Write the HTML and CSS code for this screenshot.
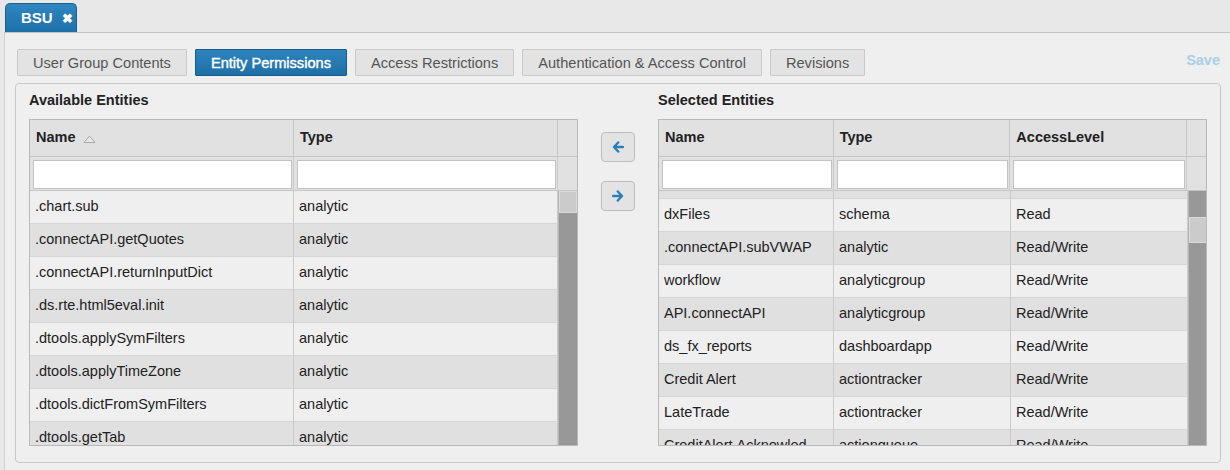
FILE: index.html
```html
<!DOCTYPE html>
<html lang="en">
<head>
    <meta charset="UTF-8">
    <title>BSU - Entity Permissions</title>
    <link rel="stylesheet" href="styles.css">
</head>
<body>
    <div class="tabbar">
        <div class="tab">BSU <span class="tab-close">&#10006;</span></div>
    </div>
    <div class="main">
        <div class="toolbar">
            <button class="seg">User Group Contents</button>
            <button class="seg active">Entity Permissions</button>
            <button class="seg">Access Restrictions</button>
            <button class="seg">Authentication &amp; Access Control</button>
            <button class="seg">Revisions</button>
            <span class="save">Save</span>
        </div>

        <div class="panel">
            <div class="side">
                <div class="side-title">Available Entities</div>
                <div class="grid">
                    <div class="grid-row head">
                        <div class="cell c-left">Name <svg class="sort" width="13" height="8" viewBox="0 0 13 8"><path d="M1 7.5 L6.5 1 L12 7.5 Z" fill="#e8e8e8" stroke="#aaa" stroke-width="1"/></svg></div>
                        <div class="cell c-left">Type</div>
                        <div class="cell c-scroll"></div>
                    </div>
                    <div class="grid-row filter">
                        <div class="cell c-left"><input type="text"></div>
                        <div class="cell c-left"><input type="text"></div>
                        <div class="cell c-scroll"></div>
                    </div>
                    <div class="grid-body">
                        <div class="rows">
                            <div class="grid-row"><div class="cell c-left">.chart.sub</div><div class="cell c-left">analytic</div></div>
                            <div class="grid-row"><div class="cell c-left">.connectAPI.getQuotes</div><div class="cell c-left">analytic</div></div>
                            <div class="grid-row"><div class="cell c-left">.connectAPI.returnInputDict</div><div class="cell c-left">analytic</div></div>
                            <div class="grid-row"><div class="cell c-left">.ds.rte.html5eval.init</div><div class="cell c-left">analytic</div></div>
                            <div class="grid-row"><div class="cell c-left">.dtools.applySymFilters</div><div class="cell c-left">analytic</div></div>
                            <div class="grid-row"><div class="cell c-left">.dtools.applyTimeZone</div><div class="cell c-left">analytic</div></div>
                            <div class="grid-row"><div class="cell c-left">.dtools.dictFromSymFilters</div><div class="cell c-left">analytic</div></div>
                            <div class="grid-row"><div class="cell c-left">.dtools.getTab</div><div class="cell c-left">analytic</div></div>
                        </div>
                        <div class="scrollbar">
                            <div class="thumb thumb-left"></div>
                        </div>
                    </div>
                </div>
            </div>

            <div class="movers">
                <button class="mover"><svg width="12" height="12" viewBox="0 0 12 12"><path d="M6.2 1.5 L2 6 L6.2 10.5 M2.3 6 H11" fill="none" stroke="#2a80b9" stroke-width="2.4" stroke-linecap="round" stroke-linejoin="round"/></svg></button>
                <button class="mover"><svg width="12" height="12" viewBox="0 0 12 12"><path d="M5.8 1.5 L10 6 L5.8 10.5 M9.7 6 H1" fill="none" stroke="#2a80b9" stroke-width="2.4" stroke-linecap="round" stroke-linejoin="round"/></svg></button>
            </div>

            <div class="side">
                <div class="side-title">Selected Entities</div>
                <div class="grid sel">
                    <div class="grid-row head">
                        <div class="cell s-name">Name</div>
                        <div class="cell s-type">Type</div>
                        <div class="cell s-type">AccessLevel</div>
                        <div class="cell c-scroll"></div>
                    </div>
                    <div class="grid-row filter">
                        <div class="cell s-name"><input type="text"></div>
                        <div class="cell s-type"><input type="text"></div>
                        <div class="cell s-type"><input type="text"></div>
                        <div class="cell c-scroll"></div>
                    </div>
                    <div class="grid-body">
                        <div class="rows scrolled">
                            <div class="grid-row"><div class="cell s-name">&nbsp;</div><div class="cell s-type">&nbsp;</div><div class="cell s-type">&nbsp;</div></div>
                            <div class="grid-row"><div class="cell s-name">dxFiles</div><div class="cell s-type">schema</div><div class="cell s-type">Read</div></div>
                            <div class="grid-row"><div class="cell s-name">.connectAPI.subVWAP</div><div class="cell s-type">analytic</div><div class="cell s-type">Read/Write</div></div>
                            <div class="grid-row"><div class="cell s-name">workflow</div><div class="cell s-type">analyticgroup</div><div class="cell s-type">Read/Write</div></div>
                            <div class="grid-row"><div class="cell s-name">API.connectAPI</div><div class="cell s-type">analyticgroup</div><div class="cell s-type">Read/Write</div></div>
                            <div class="grid-row"><div class="cell s-name">ds_fx_reports</div><div class="cell s-type">dashboardapp</div><div class="cell s-type">Read/Write</div></div>
                            <div class="grid-row"><div class="cell s-name">Credit Alert</div><div class="cell s-type">actiontracker</div><div class="cell s-type">Read/Write</div></div>
                            <div class="grid-row"><div class="cell s-name">LateTrade</div><div class="cell s-type">actiontracker</div><div class="cell s-type">Read/Write</div></div>
                            <div class="grid-row"><div class="cell s-name">CreditAlert.Acknowled</div><div class="cell s-type">actionqueue</div><div class="cell s-type">Read/Write</div></div>
                        </div>
                        <div class="scrollbar">
                            <div class="thumb thumb-right"></div>
                        </div>
                    </div>
                </div>
            </div>
        </div>
    </div>
</body>
</html>
```

FILE: styles.css
```css
body {
    margin: 0;
    font-family: 'Liberation Sans', Arial, sans-serif;
    font-size: 14.5px;
    color: #222;
    background: #e8e8e8;
    height: 470px;
    overflow: hidden;
}
.tabbar {
    height: 32px;
    padding-left: 5px;
    display: flex;
    align-items: flex-end;
}
.tab {
    width: 72px;
    height: 29px;
    box-sizing: border-box;
    padding-left: 15px;
    background: linear-gradient(#2f86c0, #1f70a8);
    border: 1px solid #1b5f8f;
    border-bottom: none;
    border-radius: 5px 5px 0 0;
    color: #fff;
    font-weight: bold;
    font-size: 15px;
    line-height: 27px;
}
.tab-close {
    font-size: 13px;
    margin-left: 5px;
}
.main {
    border-top: 1px solid #c4c4c4;
    border-left: 1px solid #d0d0d0;
    margin-left: 4px;
    background: #efefef;
    padding: 16px 9px 0 10px;
    height: 437px;
}
.toolbar {
    display: flex;
    align-items: center;
    gap: 8px;
    padding: 0 1px 0 2px;
    height: 27px;
}
.seg {
    height: 27px;
    padding: 0 15px;
    font-family: inherit;
    font-size: 14.6px;
    color: #555;
    background: #e3e3e3;
    border: 1px solid #c9c9c9;
    border-radius: 1px;
}
.seg.active {
    background: linear-gradient(#2d84be, #1f6fa6);
    border-color: #1a5b8a;
    color: #fff;
    -webkit-text-stroke: 0.4px #fff;
}
.save {
    margin-left: auto;
    color: #a8cfe5;
    font-weight: bold;
    font-size: 14.5px;
    margin-top: -6px;
}
.panel {
    margin-top: 7px;
    height: 380px;
    box-sizing: border-box;
    border: 1px solid #c8c8c8;
    border-radius: 4px;
    padding: 7px 13px 16px 13px;
    display: flex;
    align-items: flex-start;
}
.side-title {
    font-weight: bold;
    line-height: 18px;
    margin-bottom: 10px;
}
.grid {
    width: 549px;
    height: 327px;
    box-sizing: border-box;
    border: 1px solid #b9b9b9;
    display: flex;
    flex-direction: column;
    overflow: hidden;
}
.grid-row {
    display: flex;
    flex: none;
}
.cell {
    box-sizing: border-box;
    border-right: 1px solid #cbcbcb;
    border-bottom: 1px solid #d6d6d6;
    padding-left: 5px;
    height: 33px;
    line-height: 31px;
    white-space: nowrap;
    overflow: hidden;
}
.c-left { width: 264px; }
.c-scroll { width: 19px; border-right: none; }
.s-name { width: 175px; }
.s-type { width: 177px; }
.head .cell {
    height: 37px;
    line-height: 35px;
    background: #e1e1e1;
    border-bottom: 1px solid #c6c6c6;
    border-right-color: #c6c6c6;
    font-weight: bold;
    padding-left: 6px;
}
.sort { margin-left: 3px; vertical-align: -1px; }
.filter .cell {
    height: 34px;
    background: #e1e1e1;
    border-bottom: 1px solid #c6c6c6;
    padding: 3px 1px 0 3px;
    line-height: normal;
}
.filter input {
    width: 100%;
    height: 29px;
    box-sizing: border-box;
    border: 1px solid #c2c2c2;
    background: #fff;
    margin: 0;
}
.grid-body {
    flex: 1;
    display: flex;
    overflow: hidden;
}
.rows {
    flex: 1;
}
.rows .grid-row:nth-child(odd) .cell { background: #efefef; }
.rows .grid-row:nth-child(even) .cell { background: #e0e0e0; }
.rows.scrolled { margin-top: -25px; }
.rows.scrolled .grid-row:nth-child(odd) .cell { background: #e0e0e0; }
.rows.scrolled .grid-row:nth-child(even) .cell { background: #efefef; }
.scrollbar {
    width: 19px;
    background: #989898;
    border-left: 1px solid #b5b5b5;
    box-sizing: border-box;
    flex: none;
}
.thumb {
    height: 22px;
    background: #cbcbcb;
    border: 1px solid #dadada;
    box-sizing: border-box;
}
.thumb-right {
    margin-top: 26px;
    height: 26px;
}
.movers {
    width: 80px;
    padding-top: 41px;
    display: flex;
    flex-direction: column;
    align-items: center;
    gap: 19px;
}
.mover {
    width: 34px;
    height: 30px;
    background: #e3e3e3;
    border: 1px solid #bdbdbd;
    border-radius: 4px;
    padding: 0;
    display: flex;
    align-items: center;
    justify-content: center;
}
```
